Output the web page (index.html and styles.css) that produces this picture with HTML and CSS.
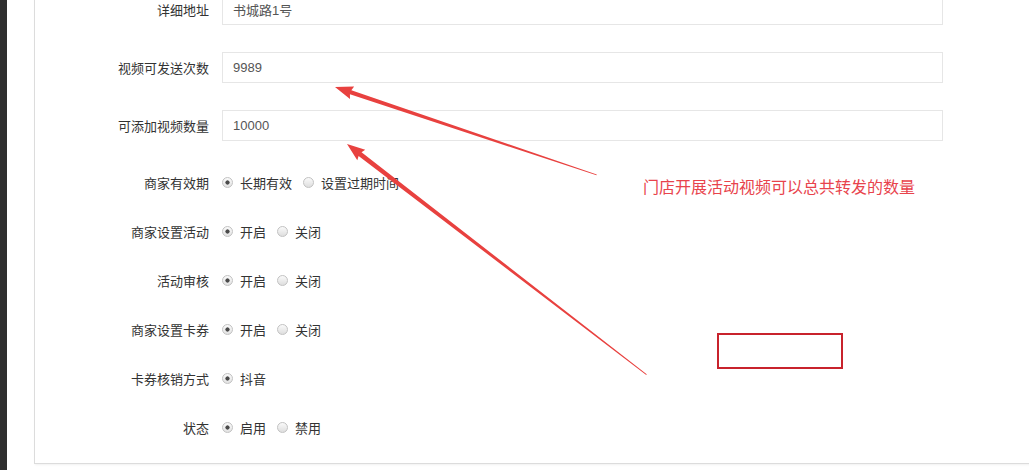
FILE: index.html
```html
<!DOCTYPE html>
<html lang="zh-CN">
<head>
  <meta charset="UTF-8" />
  <title>商家设置</title>
  <link rel="stylesheet" href="styles.css">
</head>
<body>
  <div class="layout">
    <aside class="sidebar"></aside>

    <main class="content">
      <div class="panel">
        <form class="form">
          <div class="form-row field-row">
            <label class="form-label">详细地址</label>
            <input class="form-input" type="text" value="书城路1号" />
          </div>
          <div class="form-row field-row">
            <label class="form-label">视频可发送次数</label>
            <input class="form-input" type="text" value="9989" />
          </div>
          <div class="form-row field-row">
            <label class="form-label">可添加视频数量</label>
            <input class="form-input" type="text" value="10000" />
          </div>

          <div class="form-row radio-row">
            <span class="form-label">商家有效期</span>
            <span class="radio checked">长期有效</span>
            <span class="radio">设置过期时间</span>
          </div>
          <div class="form-row radio-row">
            <span class="form-label">商家设置活动</span>
            <span class="radio checked">开启</span>
            <span class="radio">关闭</span>
          </div>
          <div class="form-row radio-row">
            <span class="form-label">活动审核</span>
            <span class="radio checked">开启</span>
            <span class="radio">关闭</span>
          </div>
          <div class="form-row radio-row">
            <span class="form-label">商家设置卡券</span>
            <span class="radio checked">开启</span>
            <span class="radio">关闭</span>
          </div>
          <div class="form-row radio-row">
            <span class="form-label">卡券核销方式</span>
            <span class="radio checked">抖音</span>
          </div>
          <div class="form-row radio-row">
            <span class="form-label">状态</span>
            <span class="radio checked">启用</span>
            <span class="radio">禁用</span>
          </div>
        </form>
      </div>
    </main>
  </div>

  <!-- annotation layer drawn over the screenshot -->
  <svg class="annotations" width="1029" height="470" viewBox="0 0 1029 470">
    <g transform="translate(335 87) rotate(18.57)">
      <polygon points="0,0 18,-6.5 16.5,-2.2 276,-0.4 276,0.4 16.5,2.2 18,6.5" />
    </g>
    <g transform="translate(347 144) rotate(37.6)">
      <polygon points="0,0 18,-6.5 16.5,-2.4 378,-0.4 378,0.4 16.5,2.4 18,6.5" />
    </g>
  </svg>
  <p class="note">门店开展活动视频可以总共转发的数量</p>
  <div class="mark-box"></div>
</body>
</html>
```

FILE: styles.css
```css
body {
  margin: 0;
  font-family: "Liberation Sans", "Noto Sans CJK SC", sans-serif;
  font-size: 13px;
  color: #333;
  background: #fff;
  height: 470px;
  overflow: hidden;
  position: relative;
}

.layout {
  display: flex;
  height: 100%;
}

.sidebar {
  width: 7px;
  flex-shrink: 0;
  background-color: #2f2f2f;
}

.content {
  flex: 1;
  padding-left: 27px;
  overflow: hidden;
}

.panel {
  margin-top: -6px;
  margin-right: -10px;
  padding-bottom: 26px;
  border-left: 1px solid #dcdcdc;
  border-bottom: 1px solid #dcdcdc;
  box-shadow: 1px 1px 2px rgba(0, 0, 0, 0.06);
  background: #fff;
}

.form {
  display: flex;
  flex-direction: column;
}

.form-row {
  display: flex;
  align-items: center;
}

.field-row {
  height: 31px;
}

.field-row + .field-row {
  margin-top: 27px;
}

.radio-row {
  height: 20px;
  margin-top: 29px;
}

.field-row + .radio-row {
  margin-top: 31px;
}

.form-label {
  width: 174px;
  margin-right: 13px;
  text-align: right;
  color: #333;
  flex-shrink: 0;
}

.form-input {
  width: 721px;
  height: 31px;
  box-sizing: border-box;
  padding: 0 10px;
  border: 1px solid #e6e6e6;
  font-family: inherit;
  font-size: 13px;
  color: #555;
  outline: none;
}

.radio {
  display: inline-flex;
  align-items: center;
  margin-right: 11px;
  color: #333;
}

.radio::before {
  content: "";
  width: 9px;
  height: 9px;
  margin-right: 7px;
  border: 1px solid #c2c2c2;
  border-radius: 50%;
  background: linear-gradient(#fafafa, #dedede);
}

.radio.checked::before {
  background: radial-gradient(circle, #4a4a4a 0 1.8px, transparent 2.4px),
    linear-gradient(#fafafa, #e2e2e2);
}

.annotations {
  position: absolute;
  top: 0;
  left: 0;
  pointer-events: none;
}

.annotations polygon {
  fill: #e8413f;
}

.note {
  position: absolute;
  top: 175px;
  left: 643px;
  margin: 0;
  font-size: 16px;
  line-height: 22px;
  color: #e8434c;
  font-family: "Noto Sans CJK SC", sans-serif;
}

.mark-box {
  position: absolute;
  top: 333px;
  left: 717px;
  width: 122px;
  height: 32px;
  border: 2px solid #c8232c;
}
```
